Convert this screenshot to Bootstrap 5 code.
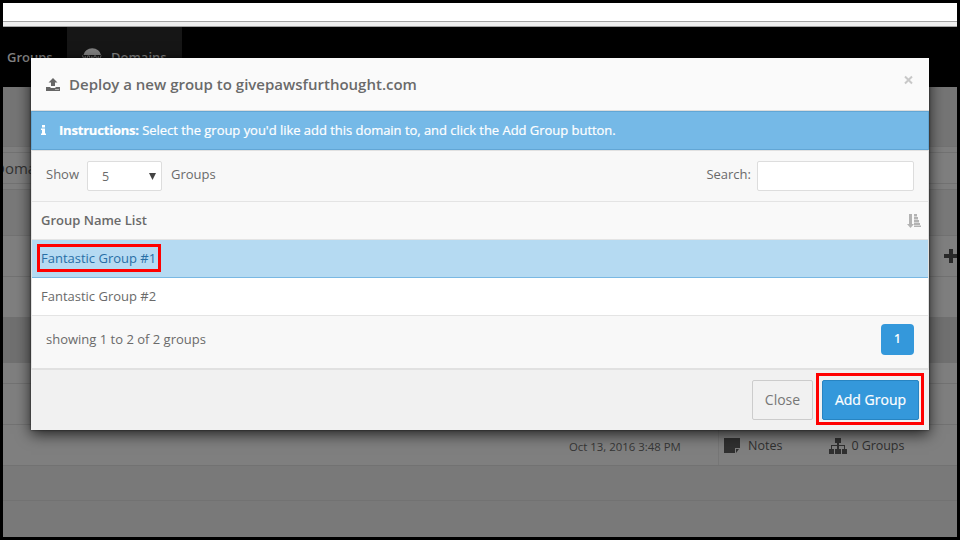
<!DOCTYPE html>
<html lang="en">
<head>
<meta charset="utf-8">
<meta name="viewport" content="width=device-width, initial-scale=1">
<title>Deploy a new group</title>
<link href="https://cdn.jsdelivr.net/npm/bootstrap@5.3.0/dist/css/bootstrap.min.css" rel="stylesheet">
<style>
body{font-family:"Open Sans","Noto Sans",sans-serif;font-size:13px;line-height:20px;color:#6a6a6a;width:960px;height:540px;overflow:hidden;background:#000}
.screen{width:960px;height:540px;border:3px solid #000;background:#7f7f7f}
.toolbar{height:18px;background:#fff}
.tool-edge{height:6px;background:#eee;border-top:1px solid #a3a3a3;border-bottom:1px solid #a3a3a3}
.topnav{height:60px;background:#000;color:#808080;font-weight:600}
.topnav .tab{padding-top:20px}
.tab-groups{width:64px;padding-left:4px}
.tab-domains{width:115px;padding-left:15px;background:#161616}
.tab-domains svg{margin-right:9px}
.band{flex:none;border-bottom:1px solid #727272;color:#333}
.shade-1{background:#757575}.shade-2{background:#797979}.shade-3{background:#707070}
.h-59{height:60px}.h-5{height:6px}.h-31{height:31px}.h-6{height:6px}.h-46{height:46px}.h-41{height:41px}.h-40{height:40px}.h-47{height:47px}.h-21{height:21px}.h-35{height:35px}
.crop-label{font-size:15px;margin-left:-9px}
.record{font-size:12.5px;color:#303030}
.record .date{width:716px;padding-left:566px;font-size:11.4px;border-right:1px solid #767676;color:#363636}
.record .cell{padding-top:2px}
.cell-groups{margin-left:47px}
.cell-groups span{margin-left:4px;letter-spacing:-.05px}
.dialog{left:31px;top:58px;width:898px;height:372px;background:#f8f8f8;box-shadow:0 4px 14px rgba(0,0,0,.75),0 0 2px rgba(0,0,0,.6)}
.dialog-head{height:53px;padding:0 15px 0 15px;background:#fafafa;border-bottom:1px solid #ddd}
.dialog-head h1{font-size:15px;line-height:20px;margin:0 0 0 9px}
.dialog-head .dismiss{margin-bottom:8px}
.note-bar{height:39px;padding:0 9px 2px;background:#75b9e7;border:1px solid #62a6d5;color:#fff;-webkit-text-stroke:.2px #fff}
.note-text{margin-left:13px;letter-spacing:-.035px}
.note-text b{letter-spacing:-.2px}
.inset-box{border:1px solid #e1e1e1;border-bottom-width:2px;height:220px}
.controls{height:51px;padding:0 14px;border-bottom:1px solid #e4e4e4}
.controls>span,.controls>label{padding-bottom:4px}
.picker{width:75px;height:30px;border:1px solid #ddd;border-radius:2px;background:#fff;margin:0 9px 0 8px;padding:1px 5px 0 14px;font-size:12.5px}
.picker svg{margin-bottom:1px}
.search-box{width:157px;height:30px;border:1px solid #ddd;border-radius:2px;background:#fff;padding:0 8px;margin-left:6px}
.list-row{height:38px;padding:0 9px 2px;border-bottom:1px solid #e4e4e4}
.row-head{background:#f9f9f9;font-weight:600;padding-right:7px}
.row-head svg{margin-top:2px}
.row-chosen{background:#b5daf2;border-bottom-color:#79b8e3;color:#286fa6}
.summary{height:48px;padding:0 14px;margin-top:-1px}
.page-no{width:33px;height:31px;border-radius:4px;background:#3498db;color:#fff;font-weight:600;font-size:12px}
.dialog-foot{height:60px;background:#f1f1f1;padding-right:10px;gap:9px}
.dialog-foot .btn{font-size:14px;height:40px;padding:0;border-radius:2px;line-height:20px}
.btn-shut{width:61px;background:#f1f1f1;border:1px solid #ccc;color:#777}
.btn-add{width:97px;background:#3498db;border:1px solid #2784c2;color:#fff;-webkit-text-stroke:.2px #fff}
.outline-red{border:3px solid red;pointer-events:none}
.outline-a{left:37px;top:244px;width:124px;height:28px}
.outline-b{left:816px;top:373px;width:108px;height:52px}
svg{display:block;flex:none}
</style>
<script src="https://cdn.jsdelivr.net/npm/bootstrap@5.3.0/dist/js/bootstrap.bundle.min.js"></script>
</head>
<body>
<div class="screen d-flex flex-column overflow-hidden">
  <div class="toolbar flex-shrink-0"></div>
  <div class="tool-edge flex-shrink-0"></div>
  <nav class="topnav d-flex flex-shrink-0">
    <div class="tab tab-groups">Groups</div>
    <div class="tab tab-domains d-flex">
      <svg width="20" height="20" viewBox="0 0 20 20"><path d="M1.500 8a8.800 7.500 0 0 1 17.500 0z" fill="#808080"/><path d="M.5 8.500l1.500 4 1.300-3 1.300 3 1.500-4M7 8.500l1.500 4 1.300-3 1.300 3 1.500-4M13.500 8.500l1.500 4 1.300-3 1.300 3 1.500-4" fill="none" stroke="#808080"/></svg>
      <span>Domains</span>
    </div>
  </nav>
  <div class="band h-59 shade-1"></div>
  <div class="band h-5"></div>
  <div class="band h-31 d-flex align-items-center"><span class="crop-label">Domain</span></div>
  <div class="band h-6"></div>
  <div class="band h-46 shade-2"></div>
  <div class="band h-41 d-flex align-items-center justify-content-end"><svg width="13" height="14" viewBox="0 0 13 14"><path d="M5 0h4v5h4v4H9v5H5V9H0V5h5z" fill="#292929"/></svg></div>
  <div class="band h-40 border-0"></div>
  <div class="band h-46 shade-3 border-0"></div>
  <div class="band h-21"></div>
  <div class="band h-41"></div>
  <div class="band h-41 record d-flex">
    <div class="date d-flex align-items-center pt-1">Oct 13, 2016 3:48 PM</div>
    <div class="cell d-flex align-items-center ps-1">
      <svg width="17" height="16" viewBox="0 0 17 16"><path d="M1 0h16v10h-5v5H1z" fill="#303030"/><path d="M13 11h3l-3 4z" fill="#303030"/></svg>
      <span class="ms-2">Notes</span>
    </div>
    <div class="cell cell-groups d-flex align-items-center">
      <svg width="18" height="16" viewBox="0 0 18 16"><path d="M6 0h6v5h-2v2h6v4h2v5h-5v-5h2V8h-5v3h2v5H6v-5h2V8H3v3h2v5H0v-5h2V7h6V5H6z" fill="#303030"/></svg>
      <span>0 Groups</span>
    </div>
  </div>
  <div class="band h-35 shade-2"></div>
  <div class="flex-grow-1 shade-2"></div>
</div>

<section class="dialog position-absolute" role="dialog" aria-label="Deploy a new group">
  <header class="dialog-head d-flex align-items-center">
    <svg width="14" height="13" viewBox="0 0 14 13"><path d="M7 0l4.500 4.500H9V8H5V4.500H2.500zM0 9h4.500v1h5V9H14v4H0zm9.500 2v1h1v-1zm2 0v1h1v-1z" fill="#666" fill-rule="evenodd"/></svg>
    <h1 class="fw-semibold">Deploy a new group to givepawsfurthought.com</h1>
    <svg class="dismiss ms-auto" width="10" height="10" viewBox="0 0 10 10"><path d="M1 1.500l7 7m0-7l-7 7" stroke="#c8c8c8" stroke-width="2"/></svg>
  </header>
  <div class="note-bar d-flex align-items-center">
    <svg width="5" height="10" viewBox="0 0 5 10"><path d="M1 0h3v2.500H1zM0 3.500h4v5h1V10H0V8.500h1V5H0z" fill="#fff"/></svg>
    <span class="note-text"><b>Instructions:</b> Select the group you'd like add this domain to, and click the Add Group button.</span>
  </div>
  <div class="inset-box">
    <div class="controls d-flex align-items-center">
      <span>Show</span>
      <div class="picker d-flex align-items-center justify-content-between"><span>5</span><svg width="7" height="7" viewBox="0 0 7 7"><path d="M0 0h7L3.500 7z" fill="#444"/></svg></div>
      <span>Groups</span>
      <label class="ms-auto" for="q">Search:</label><input id="q" class="search-box">
    </div>
    <div class="list-row row-head d-flex align-items-center justify-content-between">Group Name List
      <svg width="14" height="14" viewBox="0 0 14 14"><path d="M2 0h3v10h2l-3.500 4L0 10h2zM7 0h3v2.500H7zm0 3h4v2.500H7zm0 3h5v2.500H7zm0 3h6v2H7zm0 2.500h7V13H7z" fill="#b3b3b3"/></svg>
    </div>
    <div class="list-row row-chosen d-flex align-items-center">Fantastic Group #1</div>
    <div class="list-row bg-white d-flex align-items-center">Fantastic Group #2</div>
    <div class="summary d-flex align-items-center"><span>showing 1 to 2 of 2 groups</span><span class="page-no ms-auto d-flex align-items-center justify-content-center">1</span></div>
  </div>
  <footer class="dialog-foot d-flex align-items-center justify-content-end">
    <button class="btn btn-shut">Close</button><button class="btn btn-add">Add Group</button>
  </footer>
</section>
<div class="outline-red outline-a position-absolute"></div>
<div class="outline-red outline-b position-absolute"></div>
</body>
</html>
